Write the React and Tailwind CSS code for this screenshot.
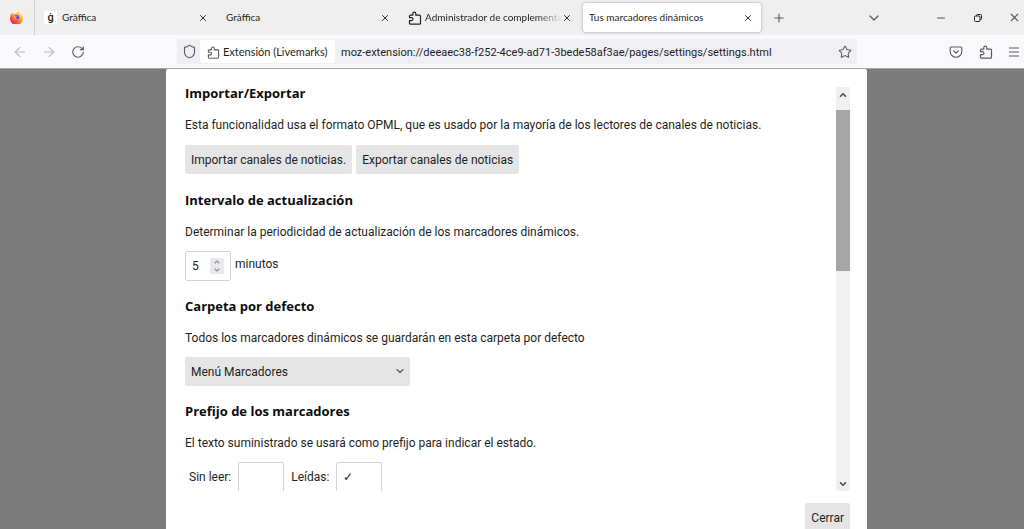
import { useState } from "react";
import { ArrowLeft, ArrowRight, ChevronDown, ChevronUp, Menu, Minus, Plus, RotateCw, Shield, Star, X } from "lucide-react";

function PuzzleIcon({ className }) {
  return (
    <svg viewBox="0 0 14 14" fill="none" stroke="currentColor" strokeWidth="1.2" strokeLinejoin="round" className={className} aria-hidden="true">
      <path d="M1.5 12.2V9.6h2a1.4 1.4 0 0 0 0-2.9h-2V5.2c0-.6.4-1 1-1h2.300V2.600a1.500 1.500 0 0 1 3 0v1.600H11.500c.6 0 1 .4 1 1v7c0 .6-.4 1-1 1H2.500c-.6 0-1-.4-1-1Z" />
    </svg>
  );
}

function PocketIcon({ className }) {
  return (
    <svg viewBox="0 0 14 14" fill="none" stroke="currentColor" strokeWidth="1.1" strokeLinecap="round" strokeLinejoin="round" className={className} aria-hidden="true">
      <path d="M2.2 2h9.6c.6 0 1 .4 1 1v3.4a5.8 5.8 0 0 1-11.6 0V3c0-.6.4-1 1-1Z" />
      <path d="m4.5 5.8 2.5 2.4 2.5-2.4" />
    </svg>
  );
}

function FirefoxIcon({ className }) {
  return (
    <svg viewBox="0 0 24 24" className={className} aria-hidden="true">
      <defs>
        <linearGradient id="flame" x1="0.85" y1="0.1" x2="0.2" y2="0.95">
          <stop offset="0" stopColor="#fff04f" />
          <stop offset="0.35" stopColor="#ffb02e" />
          <stop offset="0.65" stopColor="#ff5a36" />
          <stop offset="1" stopColor="#f0146e" />
        </linearGradient>
        <linearGradient id="globe" x1="0.5" y1="0" x2="0.5" y2="1">
          <stop offset="0" stopColor="#a04af0" />
          <stop offset="1" stopColor="#4b3fd0" />
        </linearGradient>
      </defs>
      <path fill="url(#flame)" d="M22.6 8.4c-.5-1.2-1.6-2.6-2.4-3 .7 1.3 1.1 2.6 1.2 3.6C20 5.700 17.800 4.300 16 1.400L15.100 0c-2.200 1.300-3.100 3.700-3.300 5.200-1 .1-2 .3-2.900.8C7.500 5.300 6.600 4.600 6.300 3.600 5.500 4.300 4.900 5.200 4.600 6.300L3.400 6.100C2.800 5.200 2.800 4 2.900 3.200 1.600 4.700 1 7.100.8 9.500A12 12 0 1 0 22.600 8.400Z" />
      <circle cx="12" cy="12.200" r="5.200" fill="url(#globe)" />
      <path fill="#ff9a2e" d="M5 9.200c1.800-1.700 4.700-1.400 6-.1.500.5 1 .7 1.600.9-.3.900-1.200 1.300-1.900 1.700-.5.800-.3 2.200 1 2.600 1.300.3 2.400-.2 3.400 0-.9 2.200-2.900 3.100-4.600 2.900C7.500 16.700 5.200 13.200 5 9.200Z" />
    </svg>
  );
}

function RestoreIcon({ className }) {
  return (
    <svg viewBox="0 0 10 10" fill="none" stroke="currentColor" strokeWidth="1" className={className} aria-hidden="true">
      <rect x="1.500" y="3" width="5.500" height="5.500" rx="1" />
      <path d="M3.500 3V2.500a1 1 0 0 1 1-1h3a1 1 0 0 1 1 1v3a1 1 0 0 1-1 1H7" />
    </svg>
  );
}

const tabs = [
  { title: "Gràffica", icon: "g" },
  { title: "Gràffica" },
  { title: "Administrador de complementos", icon: "puzzle", faded: true },
  { title: "Tus marcadores dinámicos", active: true },
];

function Tab({ title, icon, faded, active }) {
  return (
    <div className="w-[182px] min-w-0 px-0.5 py-[3px]">
      <div className={active ? "flex h-full items-center rounded-[3px] bg-white pr-2 pl-1.5 shadow-[0_0_3px_rgba(0,0,0,0.35)]" : "flex h-full items-center px-[7px]"}>
        {icon === "g" && <span className="mr-[5px] flex size-[13px] shrink-0 items-center justify-center bg-white text-[11px] leading-3 font-medium text-[#222]">ġ</span>}
        {icon === "puzzle" && <PuzzleIcon className="mr-[3px] size-[14px] shrink-0 text-[#222]" />}
        <button
          type="button"
          className={faded
            ? "min-w-0 flex-1 overflow-hidden text-left font-['Lato',sans-serif] text-[10px] whitespace-nowrap [mask-image:linear-gradient(to_right,black_82%,transparent)]"
            : "min-w-0 flex-1 overflow-hidden text-left font-['Lato',sans-serif] text-[10px] whitespace-nowrap"}
        >
          {title}
        </button>
        <button type="button" aria-label={`Cerrar ${title}`} className="flex size-[10px] shrink-0 items-center justify-center">
          <X className="size-[10px]" strokeWidth={2.2} />
        </button>
      </div>
    </div>
  );
}

function Section({ title, text, children }) {
  return (
    <section>
      <h2 className="mb-3 font-['Open_Sans',sans-serif] text-[13px] leading-5 font-bold text-[#0c0c0d]">{title}</h2>
      <p className="mb-[9px] leading-5">{text}</p>
      {children}
    </section>
  );
}

const buttonClass = "h-[29px] rounded-[2px] bg-[#e5e5e5] px-1.5 whitespace-nowrap";
const fieldClass = "h-[30px] w-[46px] rounded-[2px] border border-[#d3d3d6] bg-white px-1.5";

export default function App() {
  const [minutes, setMinutes] = useState(5);
  return (
    <div className="flex h-screen flex-col overflow-hidden bg-[#7b7b7b] font-['Roboto','Open_Sans',sans-serif] text-[12px] text-[#1f1f23]">
      <header className="shrink-0 border-b border-[#a5a5aa] bg-[#f9f9fb]">
        <div className="flex h-[35px] bg-[#efefef]">
          <div className="flex w-[35px] shrink-0 items-center justify-center border-r border-[#d0d0d0] pr-0.5">
            <FirefoxIcon className="size-[13px]" />
          </div>
          {tabs.map((tab, i) => <Tab key={i} {...tab} />)}
          <button type="button" aria-label="Nueva pestaña" className="flex w-8 items-center justify-center text-[#55555c]"><Plus className="size-[14px]" strokeWidth={1.8} /></button>
          <div className="ml-auto flex items-center text-[#55555c]">
            <button type="button" aria-label="Listar pestañas" className="mr-[30px] flex w-9 justify-center"><ChevronDown className="size-4" strokeWidth={1.8} /></button>
            <button type="button" aria-label="Minimizar" className="flex w-[37px] items-center justify-center"><Minus className="size-3" strokeWidth={2} /></button>
            <button type="button" aria-label="Restaurar" className="flex w-[37px] items-center justify-center"><RestoreIcon className="size-[10px] text-[#222]" /></button>
            <button type="button" aria-label="Cerrar ventana" className="flex w-[28px] items-center justify-center pl-2"><X className="size-[13px]" strokeWidth={2} /></button>
          </div>
        </div>
        <div className="flex h-[33px] items-center text-[#5b5b66]">
          <div className="flex w-[177px] shrink-0 items-center pl-[5px]">
            <button type="button" aria-label="Atrás" className="flex w-[29px] justify-center text-[#bcbcc2]"><ArrowLeft className="size-4" strokeWidth={1.7} /></button>
            <button type="button" aria-label="Adelante" className="flex w-[29px] justify-center text-[#bcbcc2]"><ArrowRight className="size-4" strokeWidth={1.7} /></button>
            <button type="button" aria-label="Recargar" className="flex w-[29px] justify-center"><RotateCw className="size-[14px]" strokeWidth={2} /></button>
          </div>
          <div className="flex h-[25px] min-w-0 flex-1 items-center rounded-[3px] bg-[#f0f0f4] p-px text-[11px]">
            <span className="flex w-[22px] shrink-0 justify-center"><Shield className="size-[15px]" strokeWidth={1.8} /></span>
            <span className="flex h-full w-[135px] shrink-0 items-center gap-[3px] rounded-[3px] bg-white pt-px pl-[7px] font-['Lato',sans-serif] whitespace-nowrap text-[#1f1f23]">
              <PuzzleIcon className="size-[13px] shrink-0 text-[#5b5b66]" />
              Extensión (Livemarks)
            </span>
            <input
              aria-label="Dirección"
              defaultValue="moz-extension://deeaec38-f252-4ce9-ad71-3bede58af3ae/pages/settings/settings.html"
              className="min-w-0 flex-1 bg-transparent px-1.5 pt-[3px] text-[#1f1f23] outline-none"
            />
            <button type="button" aria-label="Añadir a marcadores" className="flex w-[23px] shrink-0 justify-center"><Star className="size-[14px]" strokeWidth={1.8} /></button>
          </div>
          <div className="ml-[84px] flex shrink-0 items-center">
            <button type="button" aria-label="Pocket" className="flex w-[30px] justify-center"><PocketIcon className="size-[14px]" /></button>
            <button type="button" aria-label="Extensiones" className="flex w-[29px] justify-center"><PuzzleIcon className="size-[14px]" /></button>
            <button type="button" aria-label="Menú" className="flex w-6 justify-end pr-[3px]"><Menu className="size-[14px]" strokeWidth={1.8} /></button>
          </div>
        </div>
      </header>

      <main className="flex min-h-0 flex-1 justify-center pl-[9px]">
        <div className="flex w-full max-w-[701px] flex-col rounded-t-[2px] bg-white pr-[17px] pl-[19px]">
          <div className="flex min-h-0 flex-1">
            <div className="flex min-w-0 flex-1 flex-col gap-[15px] overflow-hidden pt-3.5 *:shrink-0">
              <Section title="Importar/Exportar" text="Esta funcionalidad usa el formato OPML, que es usado por la mayoría de los lectores de canales de noticias.">
                <div className="flex gap-1 py-px">
                  <button type="button" className={buttonClass}>Importar canales de noticias.</button>
                  <button type="button" className={buttonClass}>Exportar canales de noticias</button>
                </div>
              </Section>
              <Section title="Intervalo de actualización" text="Determinar la periodicidad de actualización de los marcadores dinámicos.">
                <div className="flex gap-1">
                  <div className="relative">
                    <input
                      id="interval"
                      type="number"
                      value={minutes}
                      onChange={(e) => setMinutes(Number(e.target.value))}
                      className={`${fieldClass} block [appearance:textfield] [&::-webkit-inner-spin-button]:appearance-none`}
                    />
                    <div className="absolute inset-y-[7px] right-[7px] flex w-3.5 flex-col justify-center bg-[#e9e9ed] text-[#8f8f9d]">
                      <button type="button" aria-label="Aumentar" className="flex justify-center" onClick={() => setMinutes(minutes + 1)}><ChevronUp className="size-2" strokeWidth={3.5} /></button>
                      <button type="button" aria-label="Disminuir" className="flex justify-center" onClick={() => setMinutes(minutes - 1)}><ChevronDown className="size-2" strokeWidth={3.5} /></button>
                    </div>
                  </div>
                  <label htmlFor="interval" className="leading-[26px]">minutos</label>
                </div>
              </Section>
              <Section title="Carpeta por defecto" text="Todos los marcadores dinámicos se guardarán en esta carpeta por defecto">
                <div className="relative w-[225px]">
                  <select aria-label="Carpeta por defecto" className="block h-[29px] w-full appearance-none rounded-[2px] bg-[#e5e5e5] px-1.5">
                    <option>Menú Marcadores</option>
                  </select>
                  <ChevronDown className="pointer-events-none absolute top-2 right-1 size-3 text-[#55555c]" strokeWidth={2.2} />
                </div>
              </Section>
              <Section title="Prefijo de los marcadores" text="El texto suministrado se usará como prefijo para indicar el estado.">
                <div className="flex items-center gap-[7px] pl-1">
                  <label htmlFor="unread">Sin leer:</label>
                  <input id="unread" type="text" className={fieldClass} />
                  <label htmlFor="read">Leídas:</label>
                  <input id="read" type="text" defaultValue="✓" className={fieldClass} />
                </div>
              </Section>
            </div>
            <div className="mt-[18px] flex w-3.5 shrink-0 flex-col bg-[#f0f0f0] text-[#505050]">
              <button type="button" aria-label="Subir" className="flex h-[23px] shrink-0 items-center justify-center pb-2"><ChevronUp className="size-[10px]" strokeWidth={4} /></button>
              <div className="min-h-0 flex-1"><div className="h-[45%] bg-[#a6a6a6]" /></div>
              <button type="button" aria-label="Bajar" className="flex h-[23px] shrink-0 items-center justify-center pt-2"><ChevronDown className="size-[10px]" strokeWidth={4} /></button>
            </div>
          </div>
          <footer className="flex h-[38px] shrink-0 items-start justify-end pt-3">
            <button type="button" className={`${buttonClass} shrink-0`}>Cerrar</button>
          </footer>
        </div>
      </main>
    </div>
  );
}
